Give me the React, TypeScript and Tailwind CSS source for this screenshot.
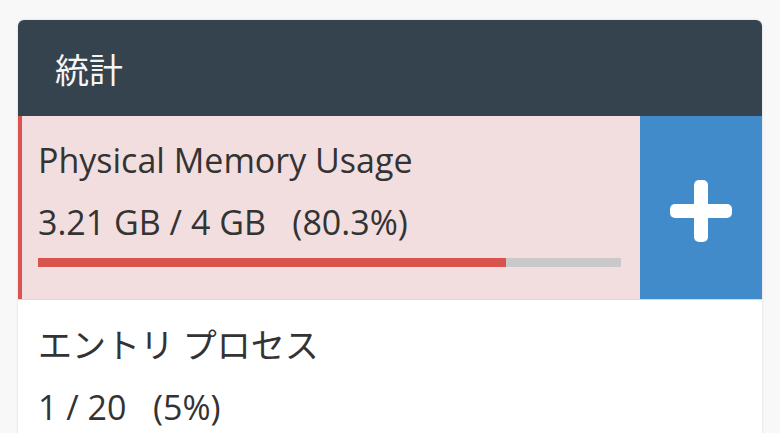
import React from 'react';

const font = "font-['Open_Sans','Noto_Sans_CJK_JP',sans-serif]";

function PlusIcon() {
  return (
    <svg width="62" height="62" viewBox="0 0 62 62" fill="#ffffff">
      <rect x="0" y="24" width="62" height="14" rx="5" />
      <rect x="24" y="0" width="14" height="62" rx="5" />
    </svg>
  );
}

export default function App() {
  const used = 80.3;

  return (
    <div className={`min-h-screen bg-[#f8f8f8] pt-5 px-[18px] ${font}`}>
      <div className="rounded-t-md bg-white shadow-[0_0_3px_rgba(0,0,0,0.12)] overflow-hidden">
        {/* header */}
        <div className="h-24 bg-[#35434f] flex items-center pl-[37px]">
          <span className="text-[34px] text-[#f5f5f5] font-['Noto_Sans_CJK_JP',sans-serif]">統計</span>
        </div>

        {/* memory row (danger state) */}
        <div className="flex bg-[#f2dede] border-b border-[#e6d3d3]">
          <div className="flex-1 border-l-4 border-[#d9534f] pl-4 pr-[19px] pt-[13px] pb-8 text-[#333333] text-[34px] leading-[62px]">
            <div>Physical Memory Usage</div>
            <div className="whitespace-pre">3.21 GB / 4 GB   (80.3%)</div>
            <div className="mt-[5px] h-[9px] bg-[#c9c9c9]">
              <div className="h-full bg-[#d9534f]" style={{ width: `${used}%` }} />
            </div>
          </div>
          <button className="w-[122px] shrink-0 bg-[#428bca] flex items-center justify-center pt-[7px]">
            <PlusIcon />
          </button>
        </div>

        {/* entry processes */}
        <div className="pl-5 pt-[14px] pb-6 text-[#333333] text-[34px] leading-[62px]">
          <div>エントリ プロセス</div>
          <div className="whitespace-pre">1 / 20   (5%)</div>
        </div>
      </div>
    </div>
  );
}
